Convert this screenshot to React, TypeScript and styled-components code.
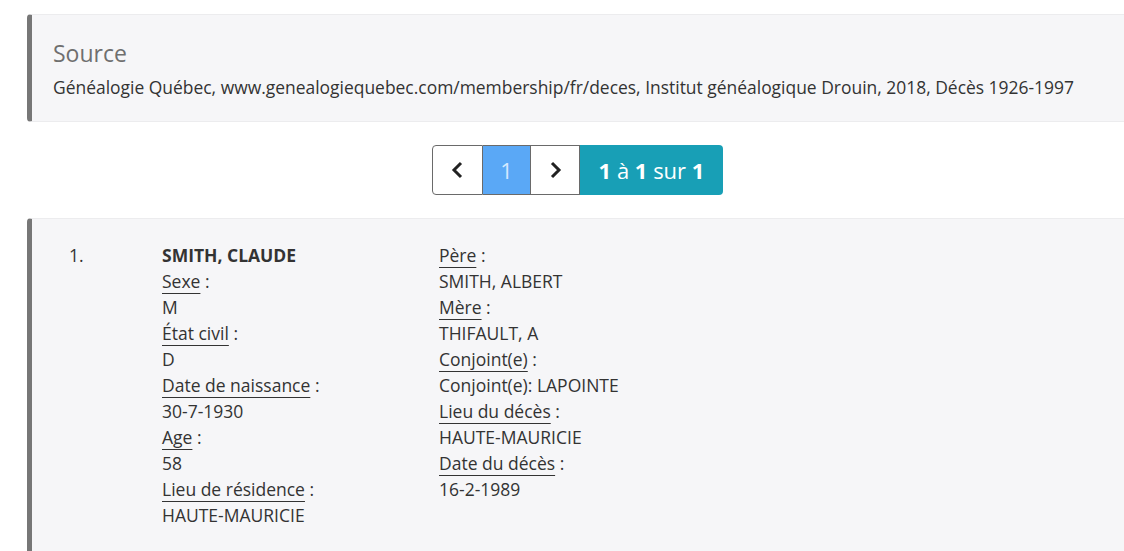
import * as React from 'react';
import styled, { createGlobalStyle } from 'styled-components';

const GlobalStyle = createGlobalStyle`
  html, body {
    margin: 0;
    padding: 0;
    background: #fff;
    overflow: hidden;
  }
  body {
    font-family: "Open Sans", "Liberation Sans", sans-serif;
    color: #333;
  }
`

const Page = styled.div`
  width: 1124px;
  overflow: hidden;
  padding: 14px 0 0 27px;
  box-sizing: border-box;
`

const Column = styled.div`
  width: 1101px;
`

const Panel = styled.section`
  background: #f6f6f8;
  border: 1px solid #ececee;
  border-left: 5px solid #777;
  border-radius: 4px 0 0 4px;
`

const SourcePanel = styled(Panel)`
  padding: 24px 22px 22px 21px;
`

const SourceTitle = styled.h2`
  margin: 0 0 8px;
  font-size: 23px;
  line-height: 28px;
  font-weight: 400;
  color: #6f6f6f;
`

const SourceText = styled.p`
  margin: 0;
  font-size: 17.45px;
  line-height: 24px;
  color: #333;
`

const PagerRow = styled.nav`
  display: flex;
  justify-content: center;
  margin: 23px 0 23px;
`

const PagerBtn = styled.div<{ $active?: boolean }>`
  display: flex;
  align-items: center;
  justify-content: center;
  height: 50px;
  box-sizing: border-box;
  width: ${p => (p.$active ? '47px' : '50px')};
  background: ${p => (p.$active ? '#5aa8f6' : '#fff')};
  color: ${p => (p.$active ? '#d4e9ff' : '#222')};
  border: 1px solid #6a6a6a;
  border-left: ${p => (p.$active ? 'none' : '1px solid #6a6a6a')};
  border-right: ${p => (p.$active ? 'none' : '1px solid #6a6a6a')};
  font-size: 22px;
  &:first-child {
    width: 51px;
    border-radius: 4px 0 0 4px;
  }
`

const PagerInfo = styled.div`
  display: flex;
  align-items: center;
  justify-content: center;
  height: 50px;
  width: 143px;
  background: #189fb6;
  color: #fff;
  font-size: 22px;
  border-radius: 0 4px 4px 0;
  b { font-weight: 700; }
`

const RecordPanel = styled(Panel)`
  padding: 23px 0 40px 37px;
  display: grid;
  grid-template-columns: 93px 277px 1fr;
  font-size: 17.5px;
  line-height: 26px;
`

const Num = styled.div``

const Fields = styled.div`
  display: flex;
  flex-direction: column;
`

const Name = styled.div`
  font-weight: 700;
`

const Label = styled.div`
  span {
    text-decoration: underline;
    text-underline-offset: 5px;
    text-decoration-thickness: 1px;
    text-decoration-skip-ink: none;
  }
`

const Chevron = ({ dir }: { dir: 'left' | 'right' }) => (
  <svg width="14" height="18" viewBox="0 0 14 18">
    <polyline
      points={dir === 'left' ? '10,2 3,9 10,16' : '4,2 11,9 4,16'}
      fill="none"
      stroke="#222"
      strokeWidth="3"
    />
  </svg>
)

const Field = ({ label, value }: { label: string; value: string }) => (
  <>
    <Label><span>{label}</span> :</Label>
    <div>{value}</div>
  </>
)

export default function App() {
  return (
    <Page>
      <GlobalStyle />
      <Column>
        <SourcePanel>
          <SourceTitle>Source</SourceTitle>
          <SourceText>
            Généalogie Québec, www.genealogiequebec.com/membership/fr/deces, Institut généalogique Drouin, 2018, Décès 1926-1997
          </SourceText>
        </SourcePanel>
        <PagerRow>
          <PagerBtn><Chevron dir="left" /></PagerBtn>
          <PagerBtn $active>1</PagerBtn>
          <PagerBtn><Chevron dir="right" /></PagerBtn>
          <PagerInfo><b>1</b>&nbsp;à&nbsp;<b>1</b>&nbsp;sur&nbsp;<b>1</b></PagerInfo>
        </PagerRow>
        <RecordPanel>
          <Num>1.</Num>
          <Fields>
            <Name>SMITH, CLAUDE</Name>
            <Field label="Sexe" value="M" />
            <Field label="État civil" value="D" />
            <Field label="Date de naissance" value="30-7-1930" />
            <Field label="Age" value="58" />
            <Field label="Lieu de résidence" value="HAUTE-MAURICIE" />
          </Fields>
          <Fields>
            <Field label="Père" value="SMITH, ALBERT" />
            <Field label="Mère" value="THIFAULT, A" />
            <Field label="Conjoint(e)" value="Conjoint(e): LAPOINTE" />
            <Field label="Lieu du décès" value="HAUTE-MAURICIE" />
            <Field label="Date du décès" value="16-2-1989" />
          </Fields>
        </RecordPanel>
      </Column>
    </Page>
  );
}
